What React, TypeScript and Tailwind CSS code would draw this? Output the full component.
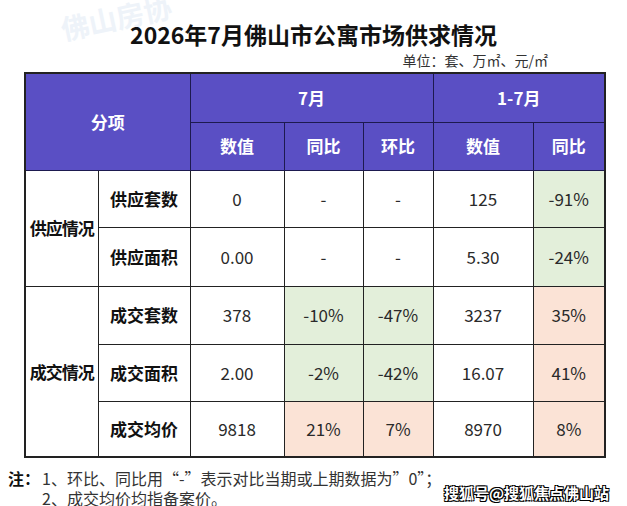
import React from "react";

type Tone = "none" | "green" | "red";

type Row = {
  label: string;
  values: [string, Tone][];
  height: string;
};

const toneClass: Record<Tone, string> = {
  none: "bg-white",
  green: "bg-[#e3efda]",
  red: "bg-[#fbe3d6]",
};

const supplyRows: Row[] = [
  {
    label: "供应套数",
    height: "h-[57px]",
    values: [
      ["0", "none"],
      ["-", "none"],
      ["-", "none"],
      ["125", "none"],
      ["-91%", "green"],
    ],
  },
  {
    label: "供应面积",
    height: "h-[59px]",
    values: [
      ["0.00", "none"],
      ["-", "none"],
      ["-", "none"],
      ["5.30", "none"],
      ["-24%", "green"],
    ],
  },
];

const dealRows: Row[] = [
  {
    label: "成交套数",
    height: "h-[58px]",
    values: [
      ["378", "none"],
      ["-10%", "green"],
      ["-47%", "green"],
      ["3237", "none"],
      ["35%", "red"],
    ],
  },
  {
    label: "成交面积",
    height: "h-[57px]",
    values: [
      ["2.00", "none"],
      ["-2%", "green"],
      ["-42%", "green"],
      ["16.07", "none"],
      ["41%", "red"],
    ],
  },
  {
    label: "成交均价",
    height: "h-[56px]",
    values: [
      ["9818", "none"],
      ["21%", "red"],
      ["7%", "red"],
      ["8970", "none"],
      ["8%", "red"],
    ],
  },
];

const cell = "border-[1.5px] border-[#222] text-center align-middle";
const head = "border-[1.5px] border-[#1d1a4f] text-center align-middle font-bold text-[17px] text-white";

function DataRow({ row, group }: { row: Row; group?: { label: string; span: number } }) {
  return (
    <tr className={row.height}>
      {group && (
        <td rowSpan={group.span} className={`${cell} font-bold text-[17px] text-[#111] whitespace-nowrap tracking-[-1px]`}>
          {group.label}
        </td>
      )}
      <td className={`${cell} font-bold text-[17px] text-[#111]`}>{row.label}</td>
      {row.values.map(([v, tone], i) => (
        <td key={i} className={`${cell} ${toneClass[tone]} text-[17px] text-[#2a2a2a]`}>
          {v}
        </td>
      ))}
    </tr>
  );
}

export default function App() {
  return (
    <div className="relative h-[506px] w-[627px] overflow-hidden bg-white font-['Noto_Sans_CJK_SC','Noto_Sans',sans-serif]">
      {/* faint background watermarks */}
      <div className="pointer-events-none absolute left-[60px] top-[-4px] -rotate-12 text-[28px] font-bold text-[#eef3f9]">
        佛山房协
      </div>
      <div className="pointer-events-none absolute left-[445px] top-[215px] -rotate-12 text-[24px] font-bold text-[#f0f0f0]">
        佛山房协
      </div>

      <div className="relative flex flex-col">
        <h1 className="mt-[20px] text-center text-[23px] font-bold leading-[28px] text-[#111]">
          2026年7月佛山市公寓市场供求情况
        </h1>
        <div className="mt-[3px] pr-[79px] text-right text-[14px] leading-[18px] text-[#333]">
          单位：套、万㎡、元/㎡
        </div>

        <table className="ml-[24px] mt-[3px] w-[580px] table-fixed border-collapse border-2 border-[#222]">
          <colgroup>
            <col className="w-[73px]" />
            <col className="w-[92px]" />
            <col className="w-[94px]" />
            <col className="w-[79px]" />
            <col className="w-[70px]" />
            <col className="w-[100px]" />
            <col className="w-[72px]" />
          </colgroup>
          <thead className="bg-[#5a4fc4]">
            <tr className="h-[49px]">
              <th colSpan={2} rowSpan={2} className={head}>
                分项
              </th>
              <th colSpan={3} className={head}>
                7月
              </th>
              <th colSpan={2} className={head}>
                1-7月
              </th>
            </tr>
            <tr className="h-[48px]">
              <th className={head}>数值</th>
              <th className={head}>同比</th>
              <th className={head}>环比</th>
              <th className={head}>数值</th>
              <th className={head}>同比</th>
            </tr>
          </thead>
          <tbody>
            {supplyRows.map((r, i) => (
              <DataRow key={r.label} row={r} group={i === 0 ? { label: "供应情况", span: 2 } : undefined} />
            ))}
            {dealRows.map((r, i) => (
              <DataRow key={r.label} row={r} group={i === 0 ? { label: "成交情况", span: 3 } : undefined} />
            ))}
          </tbody>
        </table>

        <div className="mt-[10px] flex gap-[2px] pl-[8px] text-[16px] leading-[20px] text-[#333]">
          <span className="font-bold text-[#111]">注：</span>
          <div className="flex flex-col">
            <span>1、环比、同比用“-”表示对比当期或上期数据为”0”；</span>
            <span>2、成交均价均指备案价。</span>
          </div>
        </div>
      </div>

      {/* platform watermark */}
      <div className="absolute left-[444px] top-[483px] text-[15px] font-bold leading-[20px] text-white [text-shadow:1px_1px_0_#000,-1px_-1px_0_#000,1px_-1px_0_#000,-1px_1px_0_#000]">
        搜狐号@搜狐焦点佛山站
      </div>
    </div>
  );
}
